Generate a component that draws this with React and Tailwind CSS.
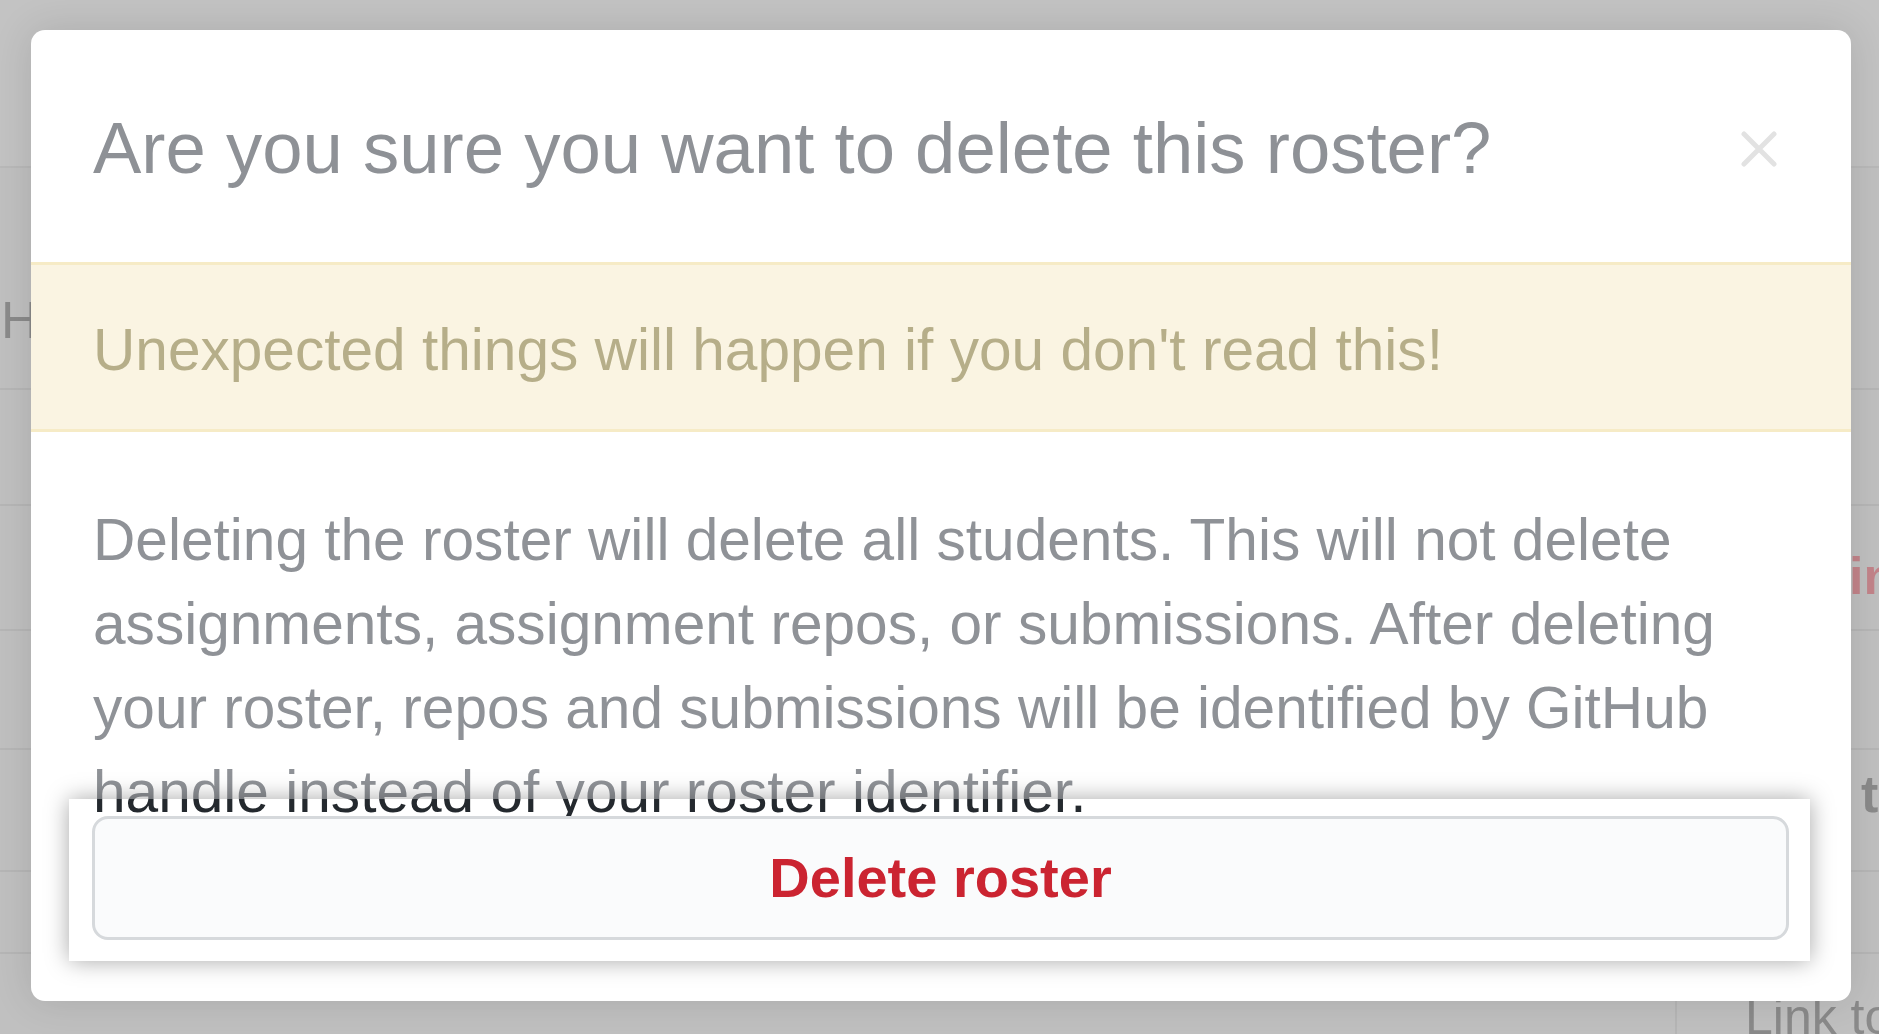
export default function App() {
  return (
    <div className="relative h-[1034px] w-full overflow-hidden bg-[#c0c0c0] font-['Liberation_Sans',Arial,sans-serif]">
      {/* page behind the backdrop */}
      <div className="flex flex-col">
        <div className="h-[168px] border-b-2 border-[#b9b9b9] bg-[#c3c3c3]" />
        <div className="flex h-[222px] items-center border-b-2 border-[#b6b6b6] pt-[84px] text-[52px] text-[#8a8a8a]">
          <span className="pl-[1px]">Home</span>
        </div>
        <div className="grid grid-cols-[1675px_1fr]">
          <div className="h-[116px] border-b-2 border-[#b6b6b6]" />
          <div className="h-[116px] border-b-2 border-[#b6b6b6]" />
          <div className="h-[125px] border-b-2 border-[#b6b6b6]" />
          <div className="flex h-[125px] items-center border-b-2 border-[#b6b6b6] pl-[174px] pt-[16px] text-[52px] font-bold text-[#c3848a]">
            invite
          </div>
          <div className="h-[119px] border-b-2 border-[#b6b6b6]" />
          <div className="h-[119px] border-b-2 border-[#b6b6b6]" />
          <div className="h-[122px] border-b-2 border-[#b6b6b6]" />
          <div className="flex h-[122px] items-center border-b-2 border-[#b6b6b6] pb-[32px] pl-[186px] text-[52px] font-bold text-[#8a8a8a]">
            to
          </div>
          <div className="h-[82px] border-b-2 border-[#b6b6b6]" />
          <div className="h-[82px] border-b-2 border-[#b6b6b6]" />
          <div className="h-[80px]" />
          <div className="flex h-[80px] items-end border-l-2 border-[#b6b6b6] pl-[68px] text-[50px] leading-[58px] text-[#8a8a8a]">
            <span className="translate-y-[12px]">Link to</span>
          </div>
        </div>
      </div>

      {/* Modal */}
      <div className="absolute left-[31px] top-[30px] w-[1820px] overflow-hidden rounded-[14px] bg-white shadow-[0_0_40px_rgba(0,0,0,0.12)]">
        {/* Header */}
        <div className="flex h-[232px] items-center justify-between pl-[62px] pr-[74px] pt-[4px]">
          <h2 className="text-[72.5px] leading-[90px] text-[#8e9196]">Are you sure you want to delete this roster?</h2>
          <svg width="36" height="36" viewBox="0 0 36 36" className="mt-[2px]">
            <path d="M3 3L33 33M33 3L3 33" stroke="#e2e2e2" strokeWidth="5" strokeLinecap="round" />
          </svg>
        </div>

        {/* Warning flash */}
        <div className="flex h-[170px] items-center border-y-[3px] border-[#f6ebc6] bg-[#faf4e2] pl-[62px] pt-[6px] text-[58.6px] text-[#b6ae89]">
          Unexpected things will happen if you don't read this!
        </div>

        {/* Body */}
        <div className="pb-[167px] pl-[62px] pr-[62px] pt-[66px] text-[58.6px] leading-[84px] text-[#8f9297]">
          Deleting the roster will delete all students. This will not delete assignments, assignment repos, or submissions. After deleting your roster, repos and submissions will be identified by GitHub handle instead of your roster identifier.
        </div>

        {/* Highlighted footer */}
        <div className="absolute left-[38px] top-[769px] w-[1741px] overflow-hidden bg-white pb-[21px] pl-[23px] pr-[21px] pt-[17px] shadow-[0_0_22px_rgba(0,0,0,0.35)]">
          <div className="absolute left-[24px] top-[-49px] whitespace-nowrap text-[58.6px] leading-[84px] text-[#24292e]">
            handle instead of your roster identifier.
          </div>
          <button className="relative flex h-[124px] w-full items-center justify-center rounded-[16px] border-[3px] border-[#d6d9dc] bg-[#fafbfc] text-[56px] font-bold text-[#cb2431]">
            Delete roster
          </button>
        </div>
      </div>
    </div>
  );
}
